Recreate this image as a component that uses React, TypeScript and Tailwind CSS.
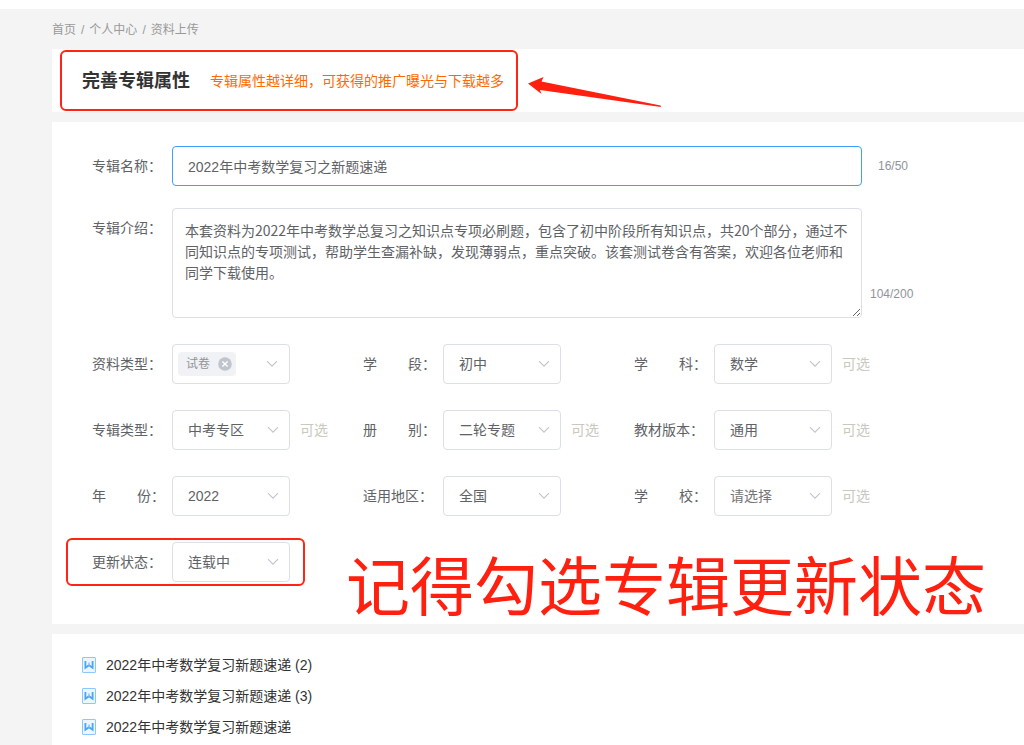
import React, { useState } from 'react';

interface Field {
  id: string;
  label: string;
  value: string;
  optional?: boolean;
  placeholder?: boolean;
}

const gap = '\u00a0'.repeat(8);

const fields: Field[] = [
  { id: 'stage', label: `学${gap}段：`, value: '初中' },
  { id: 'subject', label: `学${gap}科：`, value: '数学', optional: true },
  { id: 'album-type', label: '专辑类型：', value: '中考专区', optional: true },
  { id: 'volume', label: `册${gap}别：`, value: '二轮专题', optional: true },
  { id: 'edition', label: '教材版本：', value: '通用', optional: true },
  { id: 'year', label: `年${gap}份：`, value: '2022' },
  { id: 'region', label: '适用地区：', value: '全国' },
  { id: 'school', label: `学${gap}校：`, value: '请选择', optional: true, placeholder: true },
];

const files = ['2022年中考数学复习新题速递 (2)', '2022年中考数学复习新题速递 (3)', '2022年中考数学复习新题速递'];

const intro =
  '本套资料为2022年中考数学总复习之知识点专项必刷题，包含了初中阶段所有知识点，共20个部分，通过不同知识点的专项测试，帮助学生查漏补缺，发现薄弱点，重点突破。该套测试卷含有答案，欢迎各位老师和同学下载使用。';

function Chevron() {
  return (
    <svg width="12" height="8" viewBox="0 0 12 8" fill="none" stroke="#c0c4cc" strokeWidth="1.1">
      <path d="M1 1.2 6 6.2 11 1.2" />
    </svg>
  );
}

function SelectField({ id, label, value, optional, placeholder }: Field) {
  return (
    <div className="flex h-10 items-center">
      <label htmlFor={id} className="w-20 shrink-0 whitespace-nowrap">
        {label}
      </label>
      <div className="relative">
        <select
          id={id}
          className={`h-10 w-[118px] appearance-none rounded border border-[#dcdfe6] bg-white pl-[15px] pr-8 outline-none ${
            placeholder ? 'text-[#757575]' : 'text-[#606266]'
          }`}
        >
          <option>{value}</option>
        </select>
        <span className="pointer-events-none absolute right-[11px] top-4">
          <Chevron />
        </span>
      </div>
      {optional && <span className="ml-[10px] text-[#c9c9bd]">可选</span>}
    </div>
  );
}

function TagField() {
  return (
    <div className="flex h-10 items-center">
      <span id="material-label" className="w-20 shrink-0 whitespace-nowrap">
        资料类型：
      </span>
      <div
        role="group"
        aria-labelledby="material-label"
        className="flex h-10 w-[118px] items-center justify-between rounded border border-[#dcdfe6] pl-[5px] pr-[11px]"
      >
        <span className="flex h-6 items-center gap-2 rounded bg-[#f0f2f5] pl-2 pr-1 text-xs text-[#909399]">
          试卷
          <button type="button" aria-label="移除试卷">
            <svg className="block" width="14" height="14" viewBox="0 0 14 14">
              <circle cx="7" cy="7" r="6.8" fill="#c0c4cc" />
              <path d="M4.4 4.4 9.6 9.6M9.6 4.4 4.4 9.6" stroke="#fff" strokeWidth="1.4" />
            </svg>
          </button>
        </span>
        <button type="button" aria-label="展开资料类型">
          <Chevron />
        </button>
      </div>
    </div>
  );
}

function WordIcon() {
  return (
    <svg width="14" height="16" viewBox="0 0 14 16" fill="none">
      <rect x="0.5" y="0.5" width="13" height="15" rx="0.5" fill="#edf6ff" stroke="#8cc8ff" />
      <path d="M3.4 4V10.8L7 8.2L10.6 10.8V4" stroke="#4aa5f8" strokeWidth="1.8" />
      <path d="M7 5.5V8.5" stroke="#8cc8ff" strokeWidth="1.6" />
    </svg>
  );
}

export default function App() {
  const [title, setTitle] = useState('2022年中考数学复习之新题速递');
  const [description, setDescription] = useState(intro);

  return (
    <div className="min-h-screen overflow-x-hidden border-t-[9px] border-white bg-[#f4f4f4] pl-[52px] font-['Liberation_Sans','Noto_Sans_CJK_SC',sans-serif] text-sm text-[#606266]">
      {/* Breadcrumb */}
      <nav className="flex h-10 items-center gap-[5px] pt-0.5 text-xs text-[#999]">
        <a href="#">首页</a>
        <span>/</span>
        <a href="#">个人中心</a>
        <span>/</span>
        <a href="#">资料上传</a>
      </nav>

      {/* Title bar */}
      <header className="relative flex h-[63px] items-center gap-5 bg-white pl-[30px]">
        <h1 className="text-lg font-bold text-[#333]">完善专辑属性</h1>
        <p className="text-[#ff6a00]">专辑属性越详细，可获得的推广曝光与下载越多</p>
        <div className="pointer-events-none absolute left-2 top-px h-[61px] w-[458px] rounded-md border-2 border-[#ff2414]" />
        <svg
          className="pointer-events-none absolute left-[476px] top-7"
          width="134"
          height="32"
          viewBox="0 0 134 32"
          fill="#ff2010"
        >
          <path d="M0 6.5 15.5 0 13.5 4.5 132.5 28.5 133 30 12 13 13.5 17Z" />
        </svg>
      </header>

      {/* Album form */}
      <form className="relative mt-[10px] bg-white pb-[42px] pl-10 pt-6">
        <div className="flex items-center">
          <label htmlFor="title" className="w-20 shrink-0">
            专辑名称：
          </label>
          <input
            id="title"
            value={title}
            onChange={e => setTitle(e.target.value)}
            className="h-10 w-[690px] rounded border border-[#409eff] px-[15px] outline-none"
          />
          <span className="ml-4 text-xs text-[#909399]">16/50</span>
        </div>

        <div className="mt-[22px] flex">
          <label htmlFor="intro" className="w-20 shrink-0 leading-10">
            专辑介绍：
          </label>
          <textarea
            id="intro"
            value={description}
            onChange={e => setDescription(e.target.value)}
            className="h-[110px] w-[690px] resize rounded border border-[#dcdfe6] px-3 py-[11px] font-['Noto_Sans_CJK_SC',sans-serif] leading-[21px] outline-none"
          />
          <span className="mb-4 ml-2 self-end text-xs text-[#909399]">104/200</span>
        </div>

        <div className="mt-[26px] grid grid-cols-[271px_271px_271px] gap-y-[26px]">
          <TagField />
          {fields.map(field => (
            <SelectField key={field.id} {...field} />
          ))}
          <div className="relative">
            <SelectField id="status" label="更新状态：" value="连载中" />
            <div className="pointer-events-none absolute -left-[26px] -top-1 h-12 w-[239px] rounded-md border-2 border-[#ff2414]" />
          </div>
        </div>

        <p className="pointer-events-none absolute bottom-1 left-[294px] whitespace-nowrap text-[64px] leading-[64px] text-[#ff2010]">
          记得勾选专辑更新状态
        </p>
      </form>

      {/* Uploaded files */}
      <ul className="mt-[10px] bg-white pb-6 pl-[30px] pt-[15px] text-[#333]">
        {files.map(name => (
          <li key={name} className="flex h-[31px] items-center gap-[10px]">
            <WordIcon />
            {name}
          </li>
        ))}
      </ul>
    </div>
  );
}
